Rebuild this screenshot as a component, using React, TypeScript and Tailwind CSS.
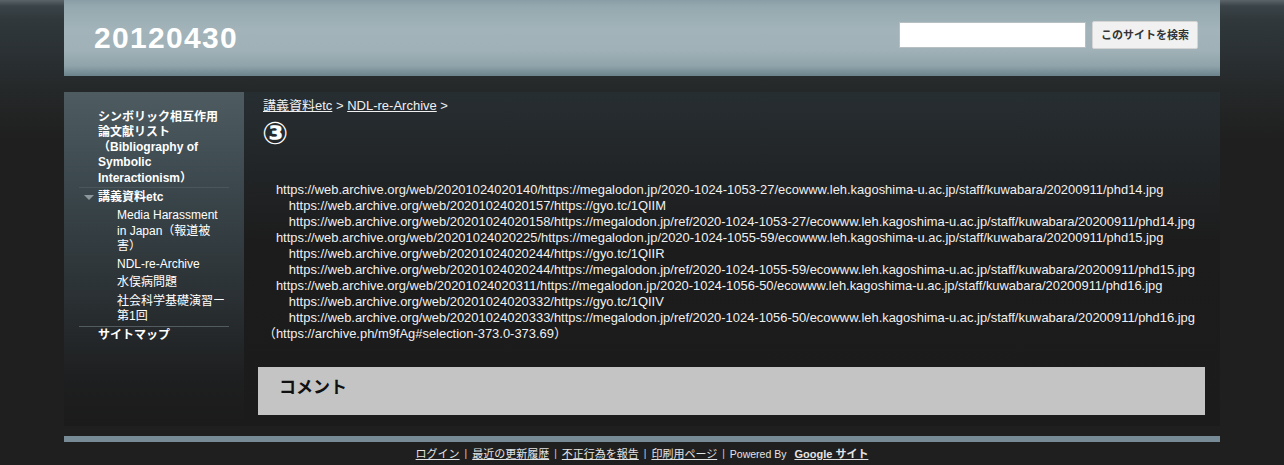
import React from "react";

const FONT = { fontFamily: '"Liberation Sans", "Noto Sans CJK JP", sans-serif' };

const lines = [
  "　https://web.archive.org/web/20201024020140/https://megalodon.jp/2020-1024-1053-27/ecowww.leh.kagoshima-u.ac.jp/staff/kuwabara/20200911/phd14.jpg",
  "　　https://web.archive.org/web/20201024020157/https://gyo.tc/1QIIM",
  "　　https://web.archive.org/web/20201024020158/https://megalodon.jp/ref/2020-1024-1053-27/ecowww.leh.kagoshima-u.ac.jp/staff/kuwabara/20200911/phd14.jpg",
  "　https://web.archive.org/web/20201024020225/https://megalodon.jp/2020-1024-1055-59/ecowww.leh.kagoshima-u.ac.jp/staff/kuwabara/20200911/phd15.jpg",
  "　　https://web.archive.org/web/20201024020244/https://gyo.tc/1QIIR",
  "　　https://web.archive.org/web/20201024020244/https://megalodon.jp/ref/2020-1024-1055-59/ecowww.leh.kagoshima-u.ac.jp/staff/kuwabara/20200911/phd15.jpg",
  "　https://web.archive.org/web/20201024020311/https://megalodon.jp/2020-1024-1056-50/ecowww.leh.kagoshima-u.ac.jp/staff/kuwabara/20200911/phd16.jpg",
  "　　https://web.archive.org/web/20201024020332/https://gyo.tc/1QIIV",
  "　　https://web.archive.org/web/20201024020333/https://megalodon.jp/ref/2020-1024-1056-50/ecowww.leh.kagoshima-u.ac.jp/staff/kuwabara/20200911/phd16.jpg",
  "（https://archive.ph/m9fAg#selection-373.0-373.69）",
];

export default function App() {
  return (
    <div
      style={FONT}
      className="min-h-[465px] bg-[#1f1f1f] bg-[linear-gradient(to_bottom,#5b6569_0px,#3a4347_6px,#30383c_20px,#2a3033_55px,#252829_90px,#1f1f1f_140px)] text-[#f0f0f0]"
    >
      <div className="mx-auto w-[1156px]">
        {/* Header */}
        <header className="flex h-[76px] items-start justify-between bg-[linear-gradient(to_bottom,#889da5_0px,#94a8af_6px,#a2b4b9_30px,#a0b2b7_50px,#8fa3aa_66px,#6b838c_76px)] pl-[30px] pr-[22px]">
          <h1 className="mt-[23px] text-[30px] font-bold leading-none tracking-[1.3px] text-white">
            20120430
          </h1>
          <div className="mt-[21px] flex items-center">
            <input
              type="text"
              className="h-[26px] w-[187px] border border-[#b7bfc3] bg-white outline-none"
            />
            <button className="ml-[6px] h-[28px] w-[106px] rounded-[2px] border border-[#d4d4d4] bg-[#f1f1f1] text-[11px] font-bold text-[#333]">
              このサイトを検索
            </button>
          </div>
        </header>

        <div className="h-[16px]" />

        {/* Main */}
        <div className="flex bg-[#1b1b1b]">
          {/* Sidebar */}
          <nav className="w-[180px] shrink-0 bg-[linear-gradient(to_bottom,#4e5c62_0%,#3a464b_30%,#2a3033_62%,#1e1f20_85%,#1b1b1b_100%)] pl-[15px] pr-[15px] pt-[16px] text-[12px] leading-[15.3px] text-white">
            <div className="py-[1.5px] pl-[19px] pr-[1px] font-bold">
              シンボリック相互作用論文献リスト（Bibliography of Symbolic Interactionism）
            </div>
            <div className="border-t border-[#4b565a]">
              <div className="flex py-[1.5px] font-bold">
                <div className="w-[19px] shrink-0 pt-[5px] pl-[5px]">
                  <div className="h-0 w-0 border-x-[5px] border-t-[5px] border-x-transparent border-t-[#8c979c]" />
                </div>
                <span>講義資料etc</span>
              </div>
              <div className="py-[1.5px] pl-[38px] pr-[2px]">Media Harassment in Japan（報道被害）</div>
              <div className="py-[1.5px] pl-[38px] pr-[2px]">NDL-re-Archive</div>
              <div className="py-[1.5px] pl-[38px] pr-[2px]">水俣病問題</div>
              <div className="py-[1.5px] pl-[38px] pr-[2px]">社会科学基礎演習ー第1回</div>
            </div>
            <div className="border-t border-[#525c60] py-[1.5px] pl-[19px] font-bold">サイトマップ</div>
          </nav>

          {/* Content */}
          <main className="min-w-0 flex-1 bg-[linear-gradient(to_bottom,#272e32_0%,#212426_25%,#1c1c1c_45%,#1b1b1b_100%)] pb-[11px] pl-[14px] pr-[15px] pt-[5px]">
            <div className="pl-[5px] text-[13px] leading-[17px]">
              <a href="#" className="underline">講義資料etc</a>
              <span> &gt; </span>
              <a href="#" className="underline">NDL-re-Archive</a>
              <span> &gt;</span>
            </div>
            <h2
              style={{ fontFamily: '"DejaVu Sans", "Noto Sans CJK JP", sans-serif' }}
              className="mt-[4px] pl-[4px] text-[31px] font-bold leading-[30px] text-white"
            >
              ③
            </h2>
            <div className="mt-[34px] whitespace-pre pl-[5px] text-[12.93px] leading-[16px] text-[#f0f0f0]">
              {lines.map((l, i) => (
                <div key={i}>{l}</div>
              ))}
            </div>
            <div className="mt-[25px] h-[48px] bg-[#c4c4c4] pl-[21px] pt-[10px] text-[17px] font-bold leading-[22px] text-[#111]">
              コメント
            </div>
          </main>
        </div>

        {/* Footer */}
        <div className="mt-[10px] h-[6px] bg-[#768b95]" />
        <div className="mt-[5px] flex items-center justify-center text-[11px] leading-[14px] text-[#e4e4e4]">
          <a href="#" className="underline">ログイン</a>
          <span className="mx-[5px] text-[10px] text-[#cfcfcf]">|</span>
          <a href="#" className="underline">最近の更新履歴</a>
          <span className="mx-[5px] text-[10px] text-[#cfcfcf]">|</span>
          <a href="#" className="underline">不正行為を報告</a>
          <span className="mx-[5px] text-[10px] text-[#cfcfcf]">|</span>
          <a href="#" className="underline">印刷用ページ</a>
          <span className="mx-[5px] text-[10px] text-[#cfcfcf]">|</span>
          <span className="text-[10.5px]">Powered By</span>
          <a href="#" className="ml-[8px] font-bold underline">Google サイト</a>
        </div>
      </div>
    </div>
  );
}
